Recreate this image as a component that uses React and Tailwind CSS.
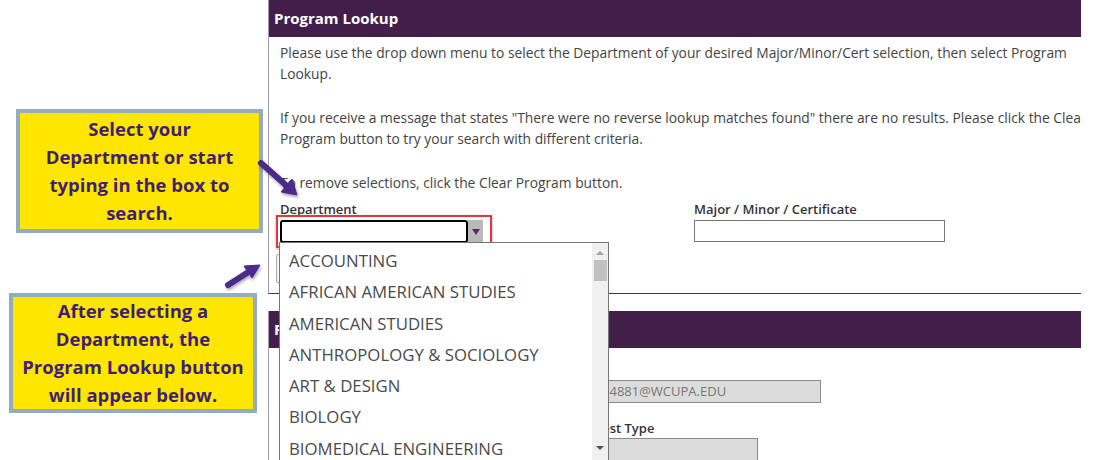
import React from "react";

const departments = [
  "ACCOUNTING",
  "AFRICAN AMERICAN STUDIES",
  "AMERICAN STUDIES",
  "ANTHROPOLOGY & SOCIOLOGY",
  "ART & DESIGN",
  "BIOLOGY",
  "BIOMEDICAL ENGINEERING",
  "BUSINESS",
];

function Callout({ className, children }) {
  return (
    <div
      className={
        "border-4 border-[#95acbf] bg-[#ffe600] flex flex-col items-center justify-center text-center font-bold text-[18.5px] leading-[28px] text-[#3f1f73] " +
        className
      }
    >
      {children}
    </div>
  );
}

function Arrows() {
  return (
    <svg className="absolute inset-0 pointer-events-none" width="1094" height="460">
      <defs>
        <filter id="sh" x="-50%" y="-50%" width="200%" height="200%">
          <feDropShadow dx="1" dy="2" stdDeviation="1.5" floodColor="#000" floodOpacity="0.35" />
        </filter>
      </defs>
      <g filter="url(#sh)" fill="#4b2a8c" stroke="#4b2a8c">
        {/* arrow to department box */}
        <line x1="261" y1="163" x2="288" y2="187" strokeWidth="6" strokeLinecap="round" />
        <polygon points="297,195 281,192 292,179" strokeWidth="1" strokeLinejoin="round" />
        {/* arrow from second callout */}
        <line x1="228" y1="285" x2="250" y2="271" strokeWidth="6" strokeLinecap="round" />
        <polygon points="260,265 252,278 244,266" strokeWidth="1" strokeLinejoin="round" />
      </g>
    </svg>
  );
}

function DropdownList() {
  return (
    <div className="absolute left-[279px] top-[242px] w-[330px] h-[230px] bg-white border border-[#767676] flex">
      <ul className="flex-1 pt-[2px]">
        {departments.map((d) => (
          <li key={d} className="h-[31.3px] leading-[31px] pl-[9px] text-[16.8px] text-[#4a4a4a] whitespace-nowrap">
            {d}
          </li>
        ))}
      </ul>
      <div className="w-[16px] bg-[#f0f0f0] flex flex-col items-center">
        <div className="mt-[8px] w-0 h-0 border-l-[4px] border-r-[4px] border-b-[4px] border-l-transparent border-r-transparent border-b-[#a3a3a3]" />
        <div className="mt-[5px] w-[13px] h-[21px] bg-[#c1c1c1]" />
        <div className="mt-[165px] w-0 h-0 border-l-[4px] border-r-[4px] border-t-[4px] border-l-transparent border-r-transparent border-t-[#505050]" />
      </div>
    </div>
  );
}

export default function App() {
  return (
    <div className="relative w-[1094px] h-[460px] overflow-hidden bg-white flex font-['Open_Sans',sans-serif]">
      {/* annotation callouts */}
      <div className="w-[268px] shrink-0 flex flex-col">
        <Callout className="ml-[16px] mt-[109px] w-[247px] h-[124px]">
          <span>Select your</span>
          <span>Department or start</span>
          <span>typing in the box to</span>
          <span>search.</span>
        </Callout>
        <Callout className="ml-[9px] mt-[60px] w-[248px] h-[120px]">
          <span>After selecting a</span>
          <span>Department, the</span>
          <span>Program Lookup button</span>
          <span>will appear below.</span>
        </Callout>
      </div>

      {/* page */}
      <div className="w-[813px] shrink-0 overflow-hidden">
        <div className="w-[900px]">
          {/* Program Lookup panel */}
          <section className="h-[294px] border-l border-b border-l-[#a79bb0] border-b-[#3a3a3a]">
            <div className="h-[37px] bg-[#421f4b] text-white font-bold text-[15px] pl-[5px] flex items-center">
              Program Lookup
            </div>
            <div className="pl-[11px] pt-[5px] text-[13.8px] leading-[21px] text-[#444] whitespace-nowrap">
              <p className="mb-[23px]">
                Please use the drop down menu to select the Department of your desired Major/Minor/Cert selection, then select Program
                <br />
                Lookup.
              </p>
              <p className="mb-[23px]">
                If you receive a message that states "There were no reverse lookup matches found" there are no results. Please click the Clear
                <br />
                Program button to try your search with different criteria.
              </p>
              <p>To remove selections, click the Clear Program button.</p>

              <div className="flex mt-[8px] text-[13px]">
                <div className="w-[414px]">
                  <div className="font-semibold text-[#333] leading-[16px] mb-[3px]">Department</div>
                  <div className="relative flex w-[204px]">
                    <div className="w-[188px] h-[23px] border-2 border-black rounded-[3px] bg-white" />
                    <div className="w-[15px] h-[23px] bg-[#b9b9b9] flex items-center justify-center">
                      <span className="w-0 h-0 border-l-[4px] border-r-[4px] border-t-[6px] border-l-transparent border-r-transparent border-t-[#5b2a6e]" />
                    </div>
                    <div className="absolute -left-[4px] -top-[5px] w-[216px] h-[33px] border-2 border-[#e8343c] shadow-[0_1px_3px_rgba(0,0,0,0.3)]" />
                  </div>
                </div>
                <div>
                  <div className="font-semibold text-[#333] leading-[16px] mb-[3px]">Major / Minor / Certificate</div>
                  <div className="w-[251px] h-[22px] border border-[#777] bg-white" />
                </div>
              </div>

              <div className="-ml-[4px] mt-[11px] w-[130px] h-[29px] border border-[#aaa] rounded-[2px] bg-[#f5f5f5]" />
            </div>
          </section>

          {/* Requester panel */}
          <section className="mt-[17px] border-l border-l-[#a79bb0] h-[200px]">
            <div className="h-[37px] bg-[#421f4b] text-white font-bold text-[15px] pl-[5px] flex items-center">
              Requester Information
            </div>
            <div className="pl-[291px] pt-[9px] text-[13px] leading-[16px]">
              <div className="font-semibold text-[#333]">Email</div>
              <div className="mt-[7px] w-[261px] h-[23px] bg-[#dcdcdc] border border-[#8a8a8a] pl-[17px] leading-[21px] text-[#777]">
                AB234881@WCUPA.EDU
              </div>
              <div className="mt-[17px] ml-[10px] font-semibold text-[#333]">Request Type</div>
              <div className="mt-[2px] w-[198px] h-[23px] bg-[#dcdcdc] border border-[#8a8a8a]" />
            </div>
          </section>
        </div>
      </div>

      <DropdownList />
      <Arrows />
    </div>
  );
}
